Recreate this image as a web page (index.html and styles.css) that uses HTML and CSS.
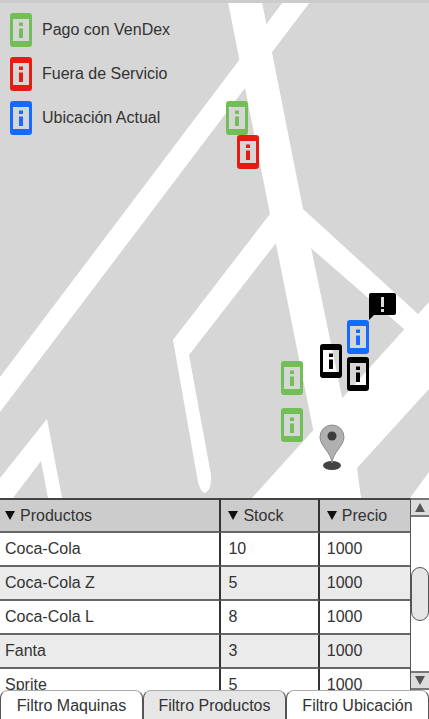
FILE: index.html
```html
<!DOCTYPE html>
<html lang="es">
<head>
<meta charset="utf-8">
<meta name="viewport" content="width=device-width, initial-scale=1">
<title>VenDex</title>
<link rel="stylesheet" href="styles.css">
</head>
<body>
<main class="app">
  <section class="map">
    <svg class="map-canvas" viewBox="0 0 429 498" preserveAspectRatio="xMidYMid slice" aria-hidden="true">
      <defs>
        <symbol id="machine" viewBox="0 0 22 34">
          <path fill="currentColor" fill-rule="evenodd" d="M3 0h16a3 3 0 0 1 3 3v28a3 3 0 0 1-3 3H3a3 3 0 0 1-3-3V3a3 3 0 0 1 3-3zM3 6v22h16V6z"/>
          <path fill="currentColor" d="M9 9.500h4v3.500H9zM9 15.500h4v9.500H9z"/>
        </symbol>
      </defs>
      <g fill="#fff">
        <path d="M228 2H262L303 209L342 397L361 498H328L313 429L270 214Z"/>
        <path d="M283 2H310L0 412V377Z"/>
        <path d="M270 214L173 340L198 482Q201 493 205 493Q212 490 211 475L189 355L276 243L290 215Z"/>
        <path d="M303 209L429 324V351L404 329L312 249L290 215Z"/>
        <path d="M429 302V389L357 468L361 498H252Z"/>
        <path d="M429 472V498H410Z"/>
        <path d="M0 478L47 419L62 498H48L41 461L13 498H0Z"/>
      </g>
      <path fill="#ccc" d="M0 0H429V3H0Z"/>
      <g class="green">
        <use href="#machine" x="226" y="101" width="22" height="34"/>
        <use href="#machine" x="281" y="361" width="22" height="34"/>
        <use href="#machine" x="281" y="408" width="22" height="34"/>
      </g>
      <use class="red" href="#machine" x="237" y="135" width="22" height="34"/>
      <use class="blue" href="#machine" x="347" y="320" width="22" height="34"/>
      <g class="black">
        <use href="#machine" x="320" y="344" width="22" height="34"/>
        <use href="#machine" x="347" y="357" width="22" height="34"/>
      </g>
      <path d="M371 293H394Q396 293 396 295V313Q396 315 394 315H374L369 320V295Q369 293 371 293Z"/>
      <path fill="#ddd" d="M381 297H384V307H381ZM381 309H384V312H381Z"/>
      <ellipse cx="332" cy="465.500" rx="9" ry="4.500" fill="#444"/>
      <path fill="#b0b0b0" stroke="#8c8c8c" d="M332 463C331 452 320 446 320 437A12 12 0 0 1 344 437C344 446 333 452 332 463Z"/>
      <circle cx="332" cy="436" r="4.500" fill="#3c3c3c"/>
    </svg>
    <ul class="legend">
      <li><svg class="marker green" aria-hidden="true"><use href="#machine"/></svg>Pago con VenDex</li>
      <li><svg class="marker red" aria-hidden="true"><use href="#machine"/></svg>Fuera de Servicio</li>
      <li><svg class="marker blue" aria-hidden="true"><use href="#machine"/></svg>Ubicación Actual</li>
    </ul>
  </section>

  <section class="list">
    <div class="rows">
      <table>
        <colgroup><col class="col-product"><col class="col-stock"><col class="col-price"></colgroup>
        <thead>
          <tr>
            <th scope="col"><button type="button"><span class="arrow down"></span>Productos</button></th>
            <th scope="col"><button type="button"><span class="arrow down"></span>Stock</button></th>
            <th scope="col"><button type="button"><span class="arrow down"></span>Precio</button></th>
          </tr>
        </thead>
        <tbody>
          <tr><td>Coca-Cola</td><td>10</td><td>1000</td></tr>
          <tr><td>Coca-Cola Z</td><td>5</td><td>1000</td></tr>
          <tr><td>Coca-Cola L</td><td>8</td><td>1000</td></tr>
          <tr><td>Fanta</td><td>3</td><td>1000</td></tr>
          <tr><td>Sprite</td><td>5</td><td>1000</td></tr>
        </tbody>
      </table>
    </div>
    <div class="scrollbar">
      <button type="button" class="step" aria-label="Subir"><span class="arrow up"></span></button>
      <div class="track"><div class="thumb"></div></div>
      <button type="button" class="step" aria-label="Bajar"><span class="arrow down"></span></button>
    </div>
  </section>

  <nav class="tabs">
    <button type="button">Filtro Maquinas</button>
    <button type="button" class="active">Filtro Productos</button>
    <button type="button">Filtro Ubicación</button>
  </nav>
</main>
</body>
</html>
```
FILE: styles.css
```css
* {
  box-sizing: border-box;
}

body {
  margin: 0;
  background: #fff;
  color: #333;
  font: 16px/20px "Liberation Sans", Arial, sans-serif;
}

button {
  margin: 0;
  padding: 0;
  border: 0;
  background: none;
  color: inherit;
  font: inherit;
}

.app {
  display: flex;
  flex-direction: column;
  height: 100vh;
  overflow: hidden;
}

/* Map */
.map {
  position: relative;
  flex: none;
  aspect-ratio: 429 / 498;
  background: #d6d6d6;
}

.map-canvas {
  display: block;
  width: 100%;
  height: 100%;
}

.green { color: #72bf57; }
.red { color: #e81a14; }
.blue { color: #1769ff; }
.black { color: #000; }

.legend {
  position: absolute;
  top: 0;
  left: 0;
  display: grid;
  gap: 10px;
  margin: 0;
  padding: 13px 10px;
  list-style: none;
}

.legend li {
  display: flex;
  align-items: center;
  gap: 10px;
}

.legend .marker {
  width: 22px;
  height: 34px;
}

/* Product list */
.list {
  display: flex;
  flex: 1;
  min-height: 0;
}

.rows {
  flex: 1;
  min-width: 0;
  overflow: hidden;
}

table {
  width: 100%;
  table-layout: fixed;
  border-collapse: separate;
  border-spacing: 0;
}

.col-product { width: 54%; }
.col-stock { width: 24%; }
.col-price { width: 22%; }

th,
td {
  height: 34px;
  padding: 0 7px;
  border-right: 2px solid #333;
  border-bottom: 2px solid #666;
  text-align: left;
  font-weight: normal;
}

th {
  height: 35px;
  border-top: 2px solid #444;
  background: #ccc;
}

th:first-child,
td:first-child {
  padding-left: 5px;
}

th:last-child,
td:last-child {
  border-right: 0;
}

tbody tr:nth-child(even) {
  background: #ebebeb;
}

th button {
  display: flex;
  align-items: center;
  gap: 5px;
}

.arrow {
  border: 5px solid transparent;
}

.arrow.down {
  border-top: 9px solid #111;
  border-bottom: 0;
}

.arrow.up {
  border-bottom: 9px solid #555;
  border-top: 0;
}

.scrollbar {
  display: flex;
  flex: none;
  flex-direction: column;
  width: 19px;
  border-left: 1px solid #555;
}

.step {
  display: grid;
  flex: none;
  place-items: center;
  height: 19px;
  border-top: 2px solid #777;
  border-bottom: 2px solid #777;
  background: #ddd;
}

.step .arrow.down {
  border-top-color: #555;
}

.track {
  flex: 1;
  padding-top: 50px;
}

.thumb {
  height: 54px;
  border: 1px solid #555;
  border-radius: 9px;
  background: #e6e6e6;
}

/* Filter tabs */
.tabs {
  display: grid;
  flex: none;
  grid-template-columns: repeat(3, 1fr);
  height: 29px;
}

.tabs button {
  padding-top: 2px;
  border: 1px solid #555;
  border-top-color: #aaa;
  border-bottom: 0;
  border-radius: 8px 8px 0 0;
  background: #fff;
  white-space: nowrap;
}

.tabs .active {
  background: #e6e6e6;
}
```
